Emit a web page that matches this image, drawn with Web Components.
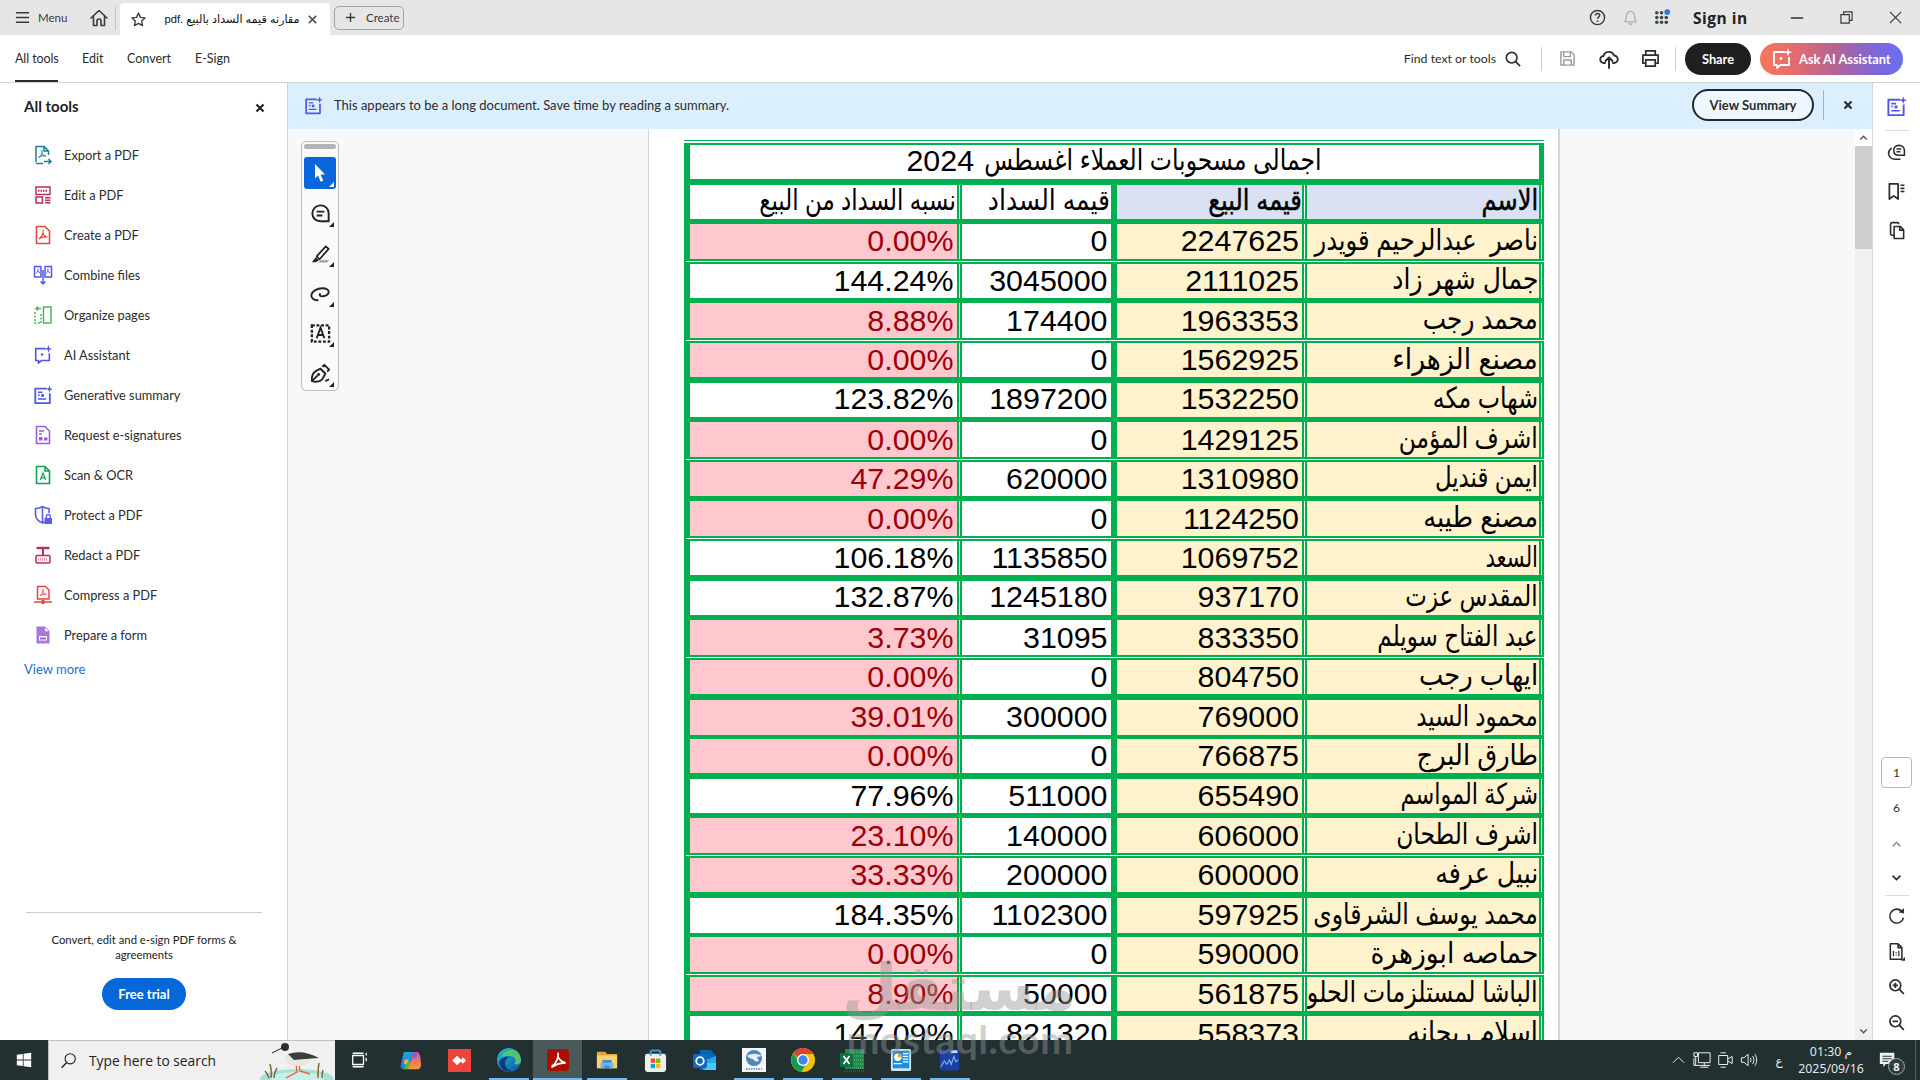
<!DOCTYPE html>
<html lang="en"><head><meta charset="utf-8"><title>Acrobat</title>
<style>
html,body{margin:0;padding:0;width:1920px;height:1080px;overflow:hidden;background:#fff}
body{font-family:Lato,"DejaVu Sans",sans-serif;color:#2c2c2c}
</style></head><body>
<app-shell></app-shell>
<script>
const S='fill="none" stroke="currentColor" stroke-width="1.6" stroke-linecap="round" stroke-linejoin="round"';
const I={
menu:['0 0 16 16','<path d="M1 3h14M1 8h14M1 13h14" fill="none" stroke="currentColor" stroke-width="1.6"/>'],
home:['0 0 20 20',`<path ${S} d="M2 10l8-7.500 8 7.500M4.500 8.500V17.500h3.500v-4.500a2 2 0 0 1 4 0v4.500h3.500V8.500"/>`],
star:['0 0 20 20',`<path ${S} d="M10 2.500l2.300 5 5.400.600-4 3.700 1.100 5.400-4.800-2.700-4.800 2.700 1.100-5.400-4-3.700 5.400-.6z"/>`],
x:['0 0 12 12','<path d="M2 2l8 8M10 2l-8 8" fill="none" stroke="currentColor" stroke-width="1.700"/>'],
xb:['0 0 12 12','<path d="M2.500 2.500l7 7M9.500 2.500l-7 7" fill="none" stroke="currentColor" stroke-width="2.200"/>'],
plus:['0 0 12 12','<path d="M6 1v10M1 6h10" fill="none" stroke="currentColor" stroke-width="1.500"/>'],
help:['0 0 18 18','<circle cx="9" cy="9" r="7.500" fill="none" stroke="currentColor" stroke-width="1.500"/><path d="M6.800 7c0-1.300 1-2.200 2.300-2.200S11.300 5.700 11.300 7c0 1.600-2.200 1.700-2.200 3.300" fill="none" stroke="currentColor" stroke-width="1.500"/><circle cx="9.100" cy="12.800" r="1" fill="currentColor"/>'],
bell:['0 0 18 18',`<path ${S} d="M3 13.500c1.500-1.500 1.500-3 1.500-5.500S6.500 2.500 9 2.500s4.500 3 4.500 5.500 0 4 1.500 5.500zM7.500 15.500c.5 1 2.500 1 3 0"/>`],
apps:['0 0 18 18','<g fill="currentColor"><circle cx="3" cy="4" r="1.900"/><circle cx="8" cy="4" r="1.900"/><circle cx="3" cy="9" r="1.900"/><circle cx="8" cy="9" r="1.900"/><circle cx="13" cy="9" r="1.900"/><circle cx="3" cy="14" r="1.900"/><circle cx="8" cy="14" r="1.900"/><circle cx="13" cy="14" r="1.900"/></g><circle cx="14" cy="3.200" r="3" fill="#1a7fe0"/>'],
min:['0 0 16 16','<path d="M1 8h14" stroke="currentColor" stroke-width="1.800"/>'],
rest:['0 0 14 14',`<path fill="none" stroke="currentColor" stroke-width="1.300" d="M1 4h9v9H1zM4 4V1h9v9h-3"/>`],
close:['0 0 14 14','<path d="M1 1l12 12M13 1L1 13" stroke="currentColor" stroke-width="1.300"/>'],
search:['0 0 18 18','<circle cx="7.500" cy="7.500" r="6" fill="none" stroke="currentColor" stroke-width="1.800"/><path d="M12 12l5 5" stroke="currentColor" stroke-width="1.800"/>'],
save:['0 0 18 18',`<path fill="none" stroke="currentColor" stroke-width="1.500" stroke-linejoin="round" d="M2 2h11l3 3v11H2zM5 2v5h7V2M5 16v-5.500h8V16"/>`],
cloud:['0 0 20 20',`<path fill="none" stroke="currentColor" stroke-width="1.900" stroke-linecap="round" stroke-linejoin="round" d="M6 14H5a3.500 3.500 0 0 1-.5-7A5.500 5.500 0 0 1 15 6.500a3.700 3.700 0 0 1 0 7.500h-1M10 19V9M6.500 12L10 8.500l3.500 3.500"/>`],
print:['0 0 20 20',`<path fill="none" stroke="currentColor" stroke-width="1.800" d="M5 6V2h10v4M5 15H2V6.500h16V15h-3M5 11.500h10V18H5z"/>`],
spark:['0 0 22 22','<path fill="none" stroke="currentColor" stroke-width="1.800" stroke-linejoin="round" d="M14 4H3v13h3v3l3.500-3H18V9"/><circle cx="10" cy="10.500" r="1.400" fill="currentColor"/><path fill="currentColor" d="M17 0l1 3.300 3.300 1-3.300 1-1 3.300-1-3.300-3.300-1 3.300-1z"/>'],
summ:['0 0 22 22','<path fill="none" stroke="currentColor" stroke-width="2" stroke-linejoin="round" d="M15 4H2.500v16h16V9"/><path stroke="currentColor" stroke-width="1.600" d="M5.500 8h5M5.500 11h2M5.500 15.500h9"/><rect x="9" y="10" width="3" height="3" fill="currentColor"/><path fill="currentColor" d="M18 .5l1 3 3 1-3 1-1 3-1-3-3-1 3-1z"/>'],
exp:['0 0 20 20','<path fill="none" stroke="currentColor" stroke-width="1.500" stroke-linejoin="round" d="M3 17V1.500h8L15.500 6v4M11 1.500V6h4.500M3 18.500h7"/><g fill="none" stroke="currentColor" stroke-width="1"><path d="M9 5c.7 3-1 6-3.500 8M9 8c.5 1.500 2 3 4 3M5.500 12c2-1 5-1.500 7.500-1"/></g><path fill="none" stroke="currentColor" stroke-width="1.500" d="M11 16.500h7M15.500 14l2.500 2.500-2.500 2.500"/>'],
edit:['0 0 20 20','<path fill="none" stroke="currentColor" stroke-width="1.500" d="M3 2h14v7.500H3zM3 12h6.500v6H3z"/><path stroke="currentColor" stroke-width="2" stroke-dasharray="1.500 1" d="M5 5.800h10"/><path stroke="currentColor" stroke-width="1.500" d="M12 12.800h5.500M12 15.300h5.500M12 17.800h5.500"/>'],
cre:['0 0 20 20','<path fill="none" stroke="currentColor" stroke-width="1.600" stroke-linejoin="round" d="M3.500 18.500v-17h8.500l4.500 4.500v12.500z"/><path fill="none" stroke="currentColor" stroke-width="1.100" d="M10 4.500c.7 3.500-1.500 7.500-4 9.500M10 8c.5 2 2.200 3.700 4.500 4M6 14c2-1.700 5.500-2.300 8.500-2"/>'],
comb:['0 0 20 20','<path fill="none" stroke="currentColor" stroke-width="1.500" stroke-linejoin="round" d="M8 12H1.500V1.500H8zM12 12h6.500V1.500H12z"/><path fill="none" stroke="currentColor" stroke-width="1" d="M5 3.500c.3 2-1 4-2 5M5 6c.3 1 1 1.500 2 2M15 3.500c.3 2-1 4-2 5M15 6c.3 1 1 1.500 2 2"/><path fill="none" stroke="currentColor" stroke-width="1.500" d="M10 5v14M7.500 16.500L10 19l2.500-2.500"/>'],
org:['0 0 20 20','<rect x="10.500" y="2" width="7.500" height="16" fill="none" stroke="currentColor" stroke-width="1.500"/><path fill="none" stroke="currentColor" stroke-width="1.500" stroke-dasharray="2 1.500" d="M2 7v11h6M8 9v9"/><path fill="none" stroke="currentColor" stroke-width="1.500" d="M8 3.500H3M5 1.500l-2 2 2 2"/>'],
req:['0 0 20 20','<path fill="none" stroke="currentColor" stroke-width="1.600" stroke-linejoin="round" d="M3.500 18.500v-17h8.500l4.500 4.500v12.500z"/><path stroke="currentColor" stroke-width="1.500" d="M6 6h5M6 9h3"/><path fill="currentColor" d="M6 12h3.500v3.500H6zM11 12.500h3.500v3H11z"/>'],
scan:['0 0 20 20','<path fill="none" stroke="currentColor" stroke-width="1.600" stroke-linejoin="round" d="M3.500 18.500v-17h8.500l4.500 4.500v12.500zM12 1.500V6h4.500"/><path fill="none" stroke="currentColor" stroke-width="1.200" d="M7.300 15l2.700-7 2.700 7M8.200 12.800h3.600"/>'],
prot:['0 0 20 20','<path fill="none" stroke="currentColor" stroke-width="1.600" stroke-linejoin="round" d="M9.500 1.500c-2 1.500-4.500 2-7 2v6c0 4 3 7 7 8.500 1-.3 1.500-.5 2.200-1M9.500 1.500c2 1.500 4 2 6.500 2V8M9.500 1.500V18"/><path fill="currentColor" d="M11.500 13h7.500v6h-7.500z"/><path fill="none" stroke="currentColor" stroke-width="1.300" d="M13.300 13v-1.500a2 2 0 0 1 4 0V13"/>'],
red:['0 0 20 20','<path stroke="currentColor" stroke-width="2.400" d="M3.500 3h13"/><path stroke="currentColor" stroke-width="2" d="M10 3v7"/><rect x="3" y="10.500" width="14" height="7.500" rx="1" fill="none" stroke="currentColor" stroke-width="1.500"/><path stroke="currentColor" stroke-width="3" stroke-dasharray="1 1" opacity=".5" d="M5 14.300h10"/>'],
comp:['0 0 20 20','<path fill="none" stroke="currentColor" stroke-width="1.500" stroke-linejoin="round" d="M4.500 14V1.500h8L16 5v9z"/><path fill="none" stroke="currentColor" stroke-width="1" d="M10 4c.5 2.500-1 5-3 6.800M10 6.500c.5 1.300 1.700 2.500 3.200 2.700M7 10.800c1.500-1.200 4-1.700 6.200-1.600"/><path stroke="currentColor" stroke-width="1.500" d="M1 17h18"/><path fill="currentColor" d="M8.500 15h3v4h-3z"/>'],
form:['0 0 20 20','<path fill="currentColor" opacity=".85" fill-rule="evenodd" d="M3.500 1.500H12l4.500 4.500v12.500h-13zM6 11v4.500h8V11z"/><path fill="#fff" d="M12 2.500v3.800h3.800"/><path fill="currentColor" d="M7 12.500h6v2H7z"/>'],
arrow:['0 0 16 20','<path fill="currentColor" d="M3 1l10 10.500H8.500l2.800 6-2.600 1.200-2.700-6.200L3 15.500z"/>'],
cmt:['0 0 24 24',`<path fill="none" stroke="currentColor" stroke-width="2" stroke-linejoin="round" d="M12 3.500c5 0 8.500 3.500 8.500 8v8.500H12C7 20 3.500 16.500 3.500 12S7 3.500 12 3.500z"/><path stroke="currentColor" stroke-width="2" d="M8 10h8M8 14h6"/>`],
pen:['0 0 24 24','<path fill="none" stroke="currentColor" stroke-width="1.800" stroke-linejoin="round" d="M8 15L17.500 4.500l3 2.700L11 18z"/><path fill="currentColor" d="M7 16l3.500 3L7 21H3z"/><path fill="#9a9a9a" d="M12 19h9l-2 2.500h-9z"/>'],
lasso:['0 0 24 24','<path fill="none" stroke="currentColor" stroke-width="2" stroke-linecap="round" d="M9 19C5 19 2 17 2.500 13.500 3 10 8 6.500 14 6.500c4.500 0 7 2 6.500 4.500-.5 2.500-4 4-7 4-2 0-3-1.500-2-2.500"/>'],
seltxt:['0 0 24 24','<path fill="none" stroke="currentColor" stroke-width="2.400" stroke-dasharray="3 1.800" d="M3 3.500h18v17H3z"/><path fill="none" stroke="currentColor" stroke-width="2" d="M8 17l4-11 4 11M9.500 13.500h5"/>'],
sign:['0 0 24 24','<path fill="none" stroke="currentColor" stroke-width="2" stroke-linejoin="round" d="M3 20c-.5-5 1-9 5-11l4-2 5 5-2 4c-2 4-6 5.500-12 4zM14 5l2-2 5 5-2 2M3 20l6-6"/><circle cx="10" cy="13" r="1.500" fill="currentColor"/><path stroke="currentColor" stroke-width="2" d="M17 20l4-2"/>'],
rcom:['0 0 24 24','<path fill="none" stroke="currentColor" stroke-width="2" stroke-linejoin="round" d="M15 3c4 0 7 2.500 7 6.500v6h-7c-4 0-6.500-2.500-6.500-6S11 3 15 3z"/><path stroke="currentColor" stroke-width="2" d="M12 7.500h6M12 11h5"/><path fill="none" stroke="currentColor" stroke-width="2" d="M6 6.500C3.500 8 2 10.500 2 13c0 4 3.500 7.500 8 7.500h7"/>'],
rbook:['0 0 24 24','<path fill="none" stroke="currentColor" stroke-width="2.200" stroke-linejoin="round" d="M3 2.500h11v19l-5.500-4-5.500 4z"/><path stroke="currentColor" stroke-width="2" d="M17 4h5M17 8h5M17 12h5"/>'],
rpage:['0 0 24 24','<path fill="none" stroke="currentColor" stroke-width="2" stroke-linejoin="round" d="M9 7h8l4 4v11H9zM16 7v4.500h5M9 18H6.500a2 2 0 0 1-2-2V4a2 2 0 0 1 2-2H13c1.500 0 2 1 2 2"/>'],
up:['0 0 14 10','<path d="M2 8l5-5 5 5" fill="none" stroke="currentColor" stroke-width="2.200"/>'],
down:['0 0 14 10','<path d="M2 2l5 5 5-5" fill="none" stroke="currentColor" stroke-width="2.200"/>'],
rot:['0 0 22 22','<path fill="none" stroke="currentColor" stroke-width="1.900" d="M17.500 6A8.500 8.500 0 1 0 19 13"/><path fill="currentColor" d="M13 6.500l6.500 1.500V1.500z"/>'],
fit:['0 0 22 24','<path fill="none" stroke="currentColor" stroke-width="2" stroke-linejoin="round" d="M3 2h10l5 5v15H3zM13 2v5h5"/><path stroke="currentColor" stroke-width="1.600" d="M7 11v7M14 11v7M10.500 12.500v1.300M10.500 15.500v1.300"/><path fill="currentColor" d="M22 19v5h-5z"/>'],
zin:['0 0 22 22','<circle cx="9.500" cy="9.500" r="7" fill="none" stroke="currentColor" stroke-width="2.200"/><path stroke="currentColor" stroke-width="2.200" d="M14.500 14.500l6 6M6 9.500h7M9.500 6v7"/>'],
zout:['0 0 22 22','<circle cx="9.500" cy="9.500" r="7" fill="none" stroke="currentColor" stroke-width="2.200"/><path stroke="currentColor" stroke-width="2.200" d="M14.500 14.500l6 6M6 9.500h7"/>'],
win:['0 0 20 20','<path fill="currentColor" d="M1 3.500l7.500-1v7H1zM9.500 2.300L19 1v8.500H9.500zM1 10.500h7.500v7l-7.500-1zM9.500 10.500H19V19l-9.500-1.300z"/>'],
mag:['0 0 20 20','<circle cx="12" cy="8" r="6" fill="none" stroke="currentColor" stroke-width="1.300"/><path stroke="currentColor" stroke-width="1.600" d="M7.800 12.300L2 18.500"/>'],
tview:['0 0 20 20','<path fill="none" stroke="currentColor" stroke-width="1.400" d="M3 5h12v10H3zM3 2.500h12M3 17.500h12M18 2v3M18 7.500v4"/>'],
copilot:['0 0 24 24','<defs><linearGradient id="a" x1="0" y1="0" x2="0" y2="1"><stop offset="0" stop-color="#1aa7d8"/><stop offset="1" stop-color="#2f6fe0"/></linearGradient><linearGradient id="b" x1="0" y1="0" x2="0" y2="1"><stop offset="0" stop-color="#e64fa0"/><stop offset="1" stop-color="#f59a2e"/></linearGradient></defs><path fill="url(#a)" d="M5 3h10l-3 10-3 8H5c-3 0-4-2-3-5z"/><path fill="#49b84f" d="M8 14l3-3 1 4-3 6-4 0z"/><path fill="url(#b)" d="M15 3h3c2 0 3 1 4 4l1 8c0 4-1 6-4 6H9l4-10z"/><path fill="#f6b833" d="M6 11h4l-2 5H5z"/><path fill="#8e5be0" d="M14 3h4l1 5-4 3z"/>'],
any:['0 0 24 24','<rect width="24" height="24" fill="#ef443b"/><path fill="#fff" d="M9.500 7l5 5-5 5-5-5zM15.500 8.500L19 12l-3.500 3.500L12.800 12l1-.8z"/>'],
edge:['0 0 24 24','<defs><linearGradient id="e" x1="0" y1="0" x2="1" y2="1"><stop offset="0" stop-color="#1fc4c8"/><stop offset="1" stop-color="#0b53a8"/></linearGradient></defs><circle cx="12" cy="12" r="12" fill="url(#e)"/><path fill="#55c271" d="M4 9c2-6 10-9 15-6 4 2.500 5 7 5 10 0 3-4 4-7 3 3-3 1-8-4-8-4 0-7 0-9 1z"/><path fill="#0a3a82" d="M9 12c-3 4 0 10 7 11-6 2-13-1-14-9 1-3 5-6 11-5-2 0-3 1-4 3z"/>'],
acro:['0 0 24 24','<rect width="24" height="24" rx="3" fill="#a90f02"/><path fill="none" stroke="#fff" stroke-width="1.800" d="M12 4c1.200 6-2 11-6.500 15 0 0-.5 1 .5.500 4-3 9-4.500 13-4 1 0 1-1 0-1-3-.5-6-3.500-7.500-7"/>'],
folder:['0 0 24 24','<path fill="#e3a73a" d="M1 3h9l2 2.500h11V21H1z"/><path fill="#f7d26e" d="M1 7h22v14H1z"/><path fill="#3d8fde" d="M7 12h10v9H7z"/><path fill="#74b7ef" d="M5 15h14v6h-4v-3H9v3H5z"/>'],
store:['0 0 24 24','<rect x="1" y="5" width="22" height="19" rx="2.500" fill="#f1eeea"/><path fill="none" stroke="#2aa0ea" stroke-width="2" d="M7 7V3.500a2 2 0 0 1 2-2h6a2 2 0 0 1 2 2V7"/><path fill="#f25022" d="M7 10h4.500v4.500H7z"/><path fill="#7fba00" d="M12.500 10H17v4.500h-4.500z"/><path fill="#00a4ef" d="M7 15.500h4.500V20H7z"/><path fill="#ffb900" d="M12.500 15.500H17V20h-4.500z"/>'],
outl:['0 0 24 24','<path fill="#0a64b5" d="M7 2h11l5 6v14H7z"/><path fill="#28a8ea" d="M10 13l13-5v14H10z"/><path fill="#50d9ff" d="M12 15h11v7H12z" opacity=".7"/><rect x="0" y="6" width="14" height="14" rx="1.500" fill="#0c6ac0"/><circle cx="7" cy="13" r="3.800" fill="none" stroke="#fff" stroke-width="1.800"/>'],
iobit:['0 0 24 24','<rect width="24" height="24" fill="#f4f6f8"/><circle cx="12" cy="10" r="8" fill="#4a87bd"/><path fill="#e8eef3" d="M5 8c4-3 10-3 15 0l-5 1 2 4c-3 1-5 0-6-2-2 0-4-1-6-3z"/><path stroke="#5a82a8" stroke-width="1.500" stroke-dasharray="1.500 1" d="M4 21h16"/>'],
chrome:['0 0 24 24','<circle cx="12" cy="12" r="12" fill="#f4c20d"/><path fill="#db4437" d="M12 0a12 12 0 0 1 10.400 6H12a6 6 0 0 0-5.500 3.600L2.500 5A12 12 0 0 1 12 0z"/><path fill="#0f9d58" d="M2.500 5l5 8.600a6 6 0 0 0 6.400 4L10.400 24A12 12 0 0 1 2.500 5z"/><circle cx="12" cy="12" r="6" fill="#fff"/><circle cx="12" cy="12" r="4.700" fill="#4285f4"/>'],
excel:['0 0 24 24','<rect x="5" y="1" width="19" height="20" fill="#1e8a4e"/><path stroke="#8fc7a5" stroke-width=".8" stroke-dasharray="1 1" d="M14 4h9M14 8h9M14 12h9M14 16h9M14 20h9"/><path stroke="#7cc" stroke-width=".8" stroke-dasharray="1 1" opacity=".6" d="M5 23h19"/><rect y="5" width="13" height="14" fill="#107040"/><path stroke="#fff" stroke-width="1.800" d="M3.500 8l6 8M9.500 8l-6 8"/>'],
chart:['0 0 24 24','<rect x="1" width="22" height="24" rx="2" fill="#cfe6f8"/><rect x="3" y="2" width="18" height="19" fill="#1c8fd8"/><circle cx="8.500" cy="9" r="4" fill="#fff"/><path fill="#f6a52c" d="M8.500 9V5a4 4 0 0 1 4 4z"/><path stroke="#fff" stroke-width="1.400" d="M14 5h6M14 8h6M14 11h6M14 14h6M4 16h9"/>'],
wave:['0 0 24 24','<rect x="1" width="22" height="24" rx="2" fill="#1d3f9e"/><path fill="#cfe4ff" d="M14 1h7v3h-7z"/><path fill="none" stroke="#6fc0ff" stroke-width="1.200" d="M2 20l4-7 3 4 3-5 2 5 3-9 2 6 3-2"/>'],
net:['0 0 20 20','<path fill="none" stroke="currentColor" stroke-width="1.100" d="M6 2h13v11H6zM1 2h4v4H1zM1 8v8h18M3 6v10M12.500 13v4M8 18h9"/>'],
meet:['0 0 20 20','<path fill="none" stroke="currentColor" stroke-width="1.100" d="M3 5h10v10H3zM13 9l5-3v8l-5-3M5 2h6M5 18h6"/>'],
vol:['0 0 20 20','<path fill="none" stroke="currentColor" stroke-width="1.100" d="M1.500 7.500h3L9 3.500v13l-4.500-4h-3zM11.500 7.500c1 1.500 1 3.500 0 5M14 5.500c2 3 2 6 0 9M16.500 3.500c2.700 4 2.700 9 0 13"/>'],
notif:['0 0 20 20','<path fill="#f2f2f2" d="M1 1h17v13H8l-3 3.500V14H1z"/><path stroke="#223030" stroke-width="1.200" d="M4 5h11M4 8h11M4 11h7"/>'],
chevt:['0 0 16 10','<path d="M1 8.500l7-7 7 7" fill="none" stroke="currentColor" stroke-width="1.200"/>']
};
const style=`<style>:host{display:inline-flex;align-items:center;justify-content:center;flex:none;line-height:0}svg{display:block;overflow:visible}</style>`;
customElements.define('x-icon',class extends HTMLElement{connectedCallback(){
  const [vb,body]=I[this.getAttribute('name')];const w=this.getAttribute('w')||16,h=this.getAttribute('h')||w;
  (this.shadowRoot||this.attachShadow({mode:'open'})).innerHTML=style+`<svg xmlns="http://www.w3.org/2000/svg" width="${w}" height="${h}" viewBox="${vb}">${body}</svg>`;}});
const def=(tag,fn)=>customElements.define(tag,class extends HTMLElement{connectedCallback(){if(this.shadowRoot)return;this.attachShadow({mode:'open'}).innerHTML=fn(this);}});

def('tab-bar',()=>`<style>
:host{display:flex;align-items:center;height:35px;background:#e6e6e6;flex:none;font-size:11.500px;color:#3a3a3a}
.tab{align-self:flex-end;margin-left:4px;width:210px;height:32px;background:#fff;border-radius:4px 4px 0 0;display:flex;align-items:center;box-sizing:border-box;padding-left:10px}
.t{margin-left:20px;width:130px;flex:none;white-space:nowrap;font:11.200px "Liberation Sans","DejaVu Sans",sans-serif;color:#111;text-align:center;display:flex;justify-content:center}
.div{width:1px;height:24px;background:#c4c4c4;margin-left:6px}
.cr{margin-left:4px;width:70px;height:24px;box-sizing:border-box;border:1.500px solid #a2a2a2;border-radius:5px;display:flex;align-items:center;padding-left:10px;gap:10px}
.sign{font:700 15.500px "Open Sans","Noto Sans",sans-serif;letter-spacing:.5px;margin-left:22px;color:#222;width:52px;white-space:nowrap}
</style>
<x-icon name="menu" w="15" style="margin-left:15px"></x-icon><span style="margin-left:8px;width:28px">Menu</span>
<x-icon name="home" w="20" style="margin-left:23px"></x-icon><span class="div"></span>
<div class="tab"><x-icon name="star" w="17"></x-icon><span class="t" dir="rtl">مقارنه قيمه السداد بالبيع .pdf</span><x-icon name="x" w="11" style="margin-left:10px;color:#555"></x-icon></div>
<div class="cr"><x-icon name="plus" w="11"></x-icon><span>Create</span></div>
<span style="flex:1"></span>
<x-icon name="help" w="17"></x-icon><x-icon name="bell" w="17" style="margin-left:16px;color:#b5b5b5"></x-icon><x-icon name="apps" w="17" style="margin-left:15px;color:#3a4a50"></x-icon>
<span class="sign">Sign in</span>
<x-icon name="min" w="14" style="margin-left:45px"></x-icon><x-icon name="rest" w="13" style="margin-left:36px"></x-icon><x-icon name="close" w="13" style="margin-left:36px;margin-right:18px"></x-icon>`);

def('tool-bar',()=>`<style>
:host{display:flex;align-items:stretch;height:48px;box-sizing:border-box;background:#fff;border-bottom:1px solid #d2d2d2;flex:none;font-size:12.500px;color:#2c2c2c}
.n{display:flex;align-items:center;box-sizing:border-box;border-bottom:2px solid transparent;padding-top:1px;white-space:nowrap;margin-left:24px}
.on{border-bottom-color:#2c2c2c;margin-left:15px;width:43px;letter-spacing:-.1px}
.r{display:flex;align-items:center;margin-left:auto}
.d{width:1px;height:24px;background:#d0d0d0}
.sh{margin-left:9px;width:66px;height:32px;border-radius:16px;background:#1f1f1f;color:#fff;font-weight:700;font-size:12.800px;display:flex;align-items:center;justify-content:center}
.ai{margin-left:9px;margin-right:17px;width:143px;height:32px;border-radius:16px;background:linear-gradient(90deg,#f5785a 0%,#e56a70 25%,#b9648f 50%,#7d67d8 80%,#6a6ff2 100%);color:#fff;font-weight:700;font-size:12.800px;display:flex;align-items:center;padding-left:11px;box-sizing:border-box;gap:6px}
</style>
<div class="n on">All tools</div><div class="n" style="width:21px">Edit</div><div class="n" style="width:44px">Convert</div><div class="n" style="width:35px">E-Sign</div>
<div class="r"><span style="font-size:12.300px">Find text or tools</span><x-icon name="search" w="16" style="margin-left:9px"></x-icon><span class="d" style="margin-left:20px"></span>
<x-icon name="save" w="17" style="margin-left:17px;color:#9a9a9a"></x-icon><x-icon name="cloud" w="20" style="margin-left:23px"></x-icon><x-icon name="print" w="19" style="margin-left:22px"></x-icon><span class="d" style="margin-left:15px"></span>
<div class="sh">Share</div><div class="ai"><x-icon name="spark" w="22"></x-icon><span>Ask AI Assistant</span></div></div>`);

def('tool-item',h=>`<style>
:host{display:flex;align-items:center;height:40px;padding-left:33px;font-size:12.800px;color:#2c2c2c}
x-icon{color:${h.getAttribute('c')}}
span{margin-left:11px}
</style><x-icon name="${h.getAttribute('i')}" w="20"></x-icon><span><slot></slot></span>`);

def('tools-panel',()=>`<style>
:host{display:flex;flex-direction:column;width:288px;box-sizing:border-box;border-right:1.500px solid #d2d2d2;background:#fff;flex:none}
.h{height:46px;margin-bottom:6px;display:flex;align-items:center;padding-left:24px;font-weight:700;font-size:15px;color:#222}
.h x-icon{margin-left:auto;margin-right:21px;margin-top:4px}
.more{height:28px;display:flex;align-items:center;padding-left:24px;color:#1c6fd0;font-size:13px}
.f{margin:auto 25px 0 26px;border-top:1px solid #cfcfcf;padding:19px 0 30px;text-align:center;font-size:11.300px;line-height:15px;color:#222}
.b{display:block;margin:16px auto 0;width:84px;height:32px;line-height:32px;border-radius:16px;background:#0667d8;color:#fff;font-weight:700;font-size:13px}
</style><div class="h">All tools<x-icon name="xb" w="12"></x-icon></div><slot></slot>
<div class="more">View more</div>
<div class="f">Convert, edit and e-sign PDF forms &amp;<br>agreements<span class="b">Free trial</span></div>`);

def('summary-banner',()=>`<style>
:host{display:flex;align-items:center;height:46px;box-sizing:border-box;background:#dcefff;padding:0 0 2px 16px;flex:none;font-size:13px;color:#2c2c2c}
.v{margin-left:auto;width:122px;height:32px;box-sizing:border-box;border:2px solid #1f2a30;border-radius:16px;background:#eef7ff;display:flex;align-items:center;justify-content:center;font-weight:700;font-size:13px}
.d{width:1px;height:30px;background:#a9b6c0;margin-left:9px}
</style><x-icon name="summ" w="19" style="color:#5258e4"></x-icon><span style="margin-left:11px">This appears to be a long document. Save time by reading a summary.</span>
<div class="v">View Summary</div><span class="d"></span><x-icon name="xb" w="12" style="margin-left:18px;margin-right:18px"></x-icon>`);

def('float-tools',()=>{const t=(n,b)=>`<div class="it${b?' on':''}"><x-icon name="${n}" w="${b?16:23}" ${b?'h="20"':''}></x-icon><i></i></div>`;return `<style>
:host{position:absolute;left:13px;top:12px;width:38px;height:250px;box-sizing:border-box;background:#fafafa;border:1.500px solid #bdbdbd;border-radius:5px;padding:2px 2px 0;z-index:2}
.g{height:5px;border-radius:3px;background:#b4b4b4;margin-bottom:8px}
.it{position:relative;width:32px;height:32px;margin-bottom:8px;display:flex;align-items:center;justify-content:center;color:#222;border-radius:3px}
.it i{position:absolute;right:2px;bottom:2px;border-left:5px solid transparent;border-bottom:5px solid currentColor}
.on{background:#0a66dd;color:#fff}
</style><div class="g"></div>${t('arrow',1)}${t('cmt')}${t('pen')}${t('lasso')}${t('seltxt')}${t('sign')}`});

def('pdf-row',h=>{
 const kind=h.getAttribute('gap'),hd=h.hasAttribute('head'),low=h.hasAttribute('low'),g=kind==='thick'?5.6:4.6;
 const cream=hd?'#d9e1f2':'#fff2cc';
 const ar=(t,s,cls='')=>`<span class="sc ${cls}" style="transform:scaleX(${s})">${t}</span>`;
 const sc=h.getAttribute('scale')||'.86';
 const v=(a,s,c)=>hd?ar(h.getAttribute(a),s,c):h.getAttribute(a);
 return `<style>
:host{display:block;height:39.620px;overflow:hidden;background:#00b050}
:host([head]){height:39.200px}
.c{display:grid;grid-template-columns:6px 267px 5px 149px 6px 185.500px 4.500px 232px 5px;height:${(hd?39.2:39.62)-g}px;font:30.400px/1 "Liberation Sans",sans-serif;color:#000}
.c>div{display:flex;align-items:center;justify-content:flex-end;overflow:hidden;white-space:nowrap;padding:0 3px 2px 0}
.l{background:linear-gradient(90deg,#00b050 0 35%,#fff 35% 60%,#00b050 60%)}
.p{background:#fff;${low?'background:#ffc7ce;color:#9c0006;':''}}
.w{background:#fff}.k{background:${cream}}
.a{font-family:"Liberation Sans","DejaVu Sans",sans-serif;padding-right:.5px !important;justify-content:flex-start !important;direction:rtl}
.sc{display:inline-block;flex:none;white-space:pre;font:29px/1 "Liberation Sans","DejaVu Sans",sans-serif;transform-origin:100% 50%}
.bd{-webkit-text-stroke:.5px #000}
.g{height:${g}px;margin-left:2.500px;${kind==='thin'?'background:linear-gradient(#00b050 0 38%,#fff 38% 60%,#00b050 60%);':''}}
.c>.sp{padding:0}
</style><div class="c"><div class="sp"></div>
<div class="p ${hd?'a':''}">${v('pct','.79')}</div><div class="l sp"></div>
<div class="w ${hd?'a':''}">${v('paid','.86')}</div><div class="sp"></div>
<div class="k ${hd?'a':''}">${v('sale','.83','bd')}</div><div class="l sp"></div>
<div class="k a">${ar(h.getAttribute('name'),hd?'.83':sc,hd?'bd':'')}</div><div class="l sp"></div></div><div class="g"></div>`});

def('pdf-title',()=>`<style>
:host{display:block;background:#00b050;padding:0 5px 0 6px;height:45px;box-sizing:border-box}
.t{height:5px;margin:0 -5px 0 -6px;background:linear-gradient(#00b050 0 30%,#fff 30% 55%,#00b050 55%)}
.m{height:34px;box-sizing:border-box;padding-bottom:3px;background:#fff;display:flex;align-items:center;justify-content:center;direction:rtl;color:#000}
.ar{display:inline-block;flex:none;white-space:pre;font:29px/1 "Liberation Sans","DejaVu Sans",sans-serif;transform:scaleX(.81);transform-origin:100% 50%;margin-left:-79px}
b{font:400 30.400px/1 "Liberation Sans",sans-serif;margin-right:10px;flex:none}
</style><div class="t"></div><div class="m"><span class="ar"><slot></slot></span><b>2024</b></div>`);

def('pdf-page',()=>`<style>
:host{display:block;width:912px;box-sizing:border-box;margin-left:360px;background:#fff;border-left:1.500px solid #d4d4d4;border-right:2px solid #d4d4d4;padding:11px 0 0 34.500px;min-height:100%}
.tb{width:860px}
</style><div class="tb"><slot></slot></div>`);

def('doc-view',()=>`<style>
:host{display:flex;flex-direction:column;flex:1;min-width:0;background:#f8f8f8}
.b{display:flex;flex:1;min-height:0}
.v{position:relative;flex:1;overflow:hidden;background:#f8f8f8}
.sb{width:17px;flex:none;background:#f0f0f0;position:relative;display:flex;flex-direction:column;align-items:center;color:#555}
.top,.bot{height:17px;width:17px;background:#fff;display:flex;align-items:center;justify-content:center;flex:none}
.th{height:103px;width:100%;background:#cdcfcd;flex:none}
.bot{margin-top:auto;background:#f0f0f0}
</style><summary-banner></summary-banner><div class="b"><div class="v"><float-tools></float-tools><slot></slot></div>
<div class="sb"><div class="top"><x-icon name="up" w="9" h="7"></x-icon></div><div class="th"></div><div class="bot"><x-icon name="down" w="9" h="7"></x-icon></div></div></div>`);

def('right-rail',()=>`<style>
:host{display:flex;flex-direction:column;align-items:center;width:48px;box-sizing:border-box;border-left:1.500px solid #d8d8d8;background:#fff;flex:none;color:#2c2c2c;font-size:12px}
.i{display:flex;align-items:center;justify-content:center;width:100%;flex:none}
.s{width:24px;height:1px;background:#dcdcdc;margin:0 auto;flex:none}
.box{width:31px;height:31px;box-sizing:border-box;border:1px solid #b8b8b8;border-radius:4px;display:flex;align-items:center;justify-content:center;flex:none;margin-top:auto}
</style>
<div class="i" style="height:46px"><x-icon name="summ" w="21" style="color:#5258e4"></x-icon></div><div class="s" style="margin-top:1px"></div>
<div class="i" style="height:42px"><x-icon name="rcom" w="19"></x-icon></div><div class="i" style="height:36px"><x-icon name="rbook" w="19"></x-icon></div><div class="i" style="height:42px"><x-icon name="rpage" w="19"></x-icon></div>
<div class="box">1</div><div class="i" style="height:37px;margin-top:1px;padding-bottom:1px">6</div>
<div class="i" style="height:34px;color:#9a9a9a"><x-icon name="up" w="11" h="8"></x-icon></div><div class="i" style="height:34px"><x-icon name="down" w="11" h="8"></x-icon></div><div class="s"></div>
<div class="i" style="height:36px;margin-top:2px"><x-icon name="rot" w="18"></x-icon></div><div class="i" style="height:34px"><x-icon name="fit" w="17" h="19"></x-icon></div>
<div class="i" style="height:36px"><x-icon name="zin" w="17"></x-icon></div><div class="i" style="height:36px"><x-icon name="zout" w="17"></x-icon></div>`);

def('task-slot',h=>`<style>
:host{display:flex;align-items:center;justify-content:center;width:49px;height:40px;position:relative;flex:none;${h.hasAttribute('active')?'background:#4a5a5b;':''}}
i{position:absolute;bottom:0;left:${h.hasAttribute('active')?'0':'5px'};right:${h.hasAttribute('active')?'0':'4px'};height:2px;background:#76b9ed;display:${h.hasAttribute('run')?'block':'none'}}
</style><slot></slot><i></i>`);

def('task-bar',()=>{const tray=(n,w)=>`<span style="width:${w}px;display:flex;justify-content:center;flex:none"><x-icon name="${n}" w="18"></x-icon></span>`;
const bird=`<svg width="75" height="40" viewBox="0 0 75 40" style="position:absolute;right:0;top:0"><ellipse cx="37" cy="38" rx="37" ry="10" fill="#a9e0d6"/><ellipse cx="37" cy="37" rx="27" ry="6" fill="#c9efe8"/><path d="M11 37c1-5 0-10-1-14M14 37c0-4 1-7 3-10M9 37c-1-3-2-5-4-7M58 37c0-5 0-10 1-15M62 37c0-3 0-5 1-8" stroke="#7a6a3a" stroke-width="1.500" fill="none"/><path d="M36 23l1 8-11 6M39 23l1 7 10 3" stroke="#e8603c" stroke-width="1.400" fill="none"/><path d="M24 8l8 7-3 2-8-7z" fill="#f0efe9"/><ellipse cx="38" cy="18" rx="13" ry="7" fill="#e8e6df"/><path d="M28 13Q42 8 59 17 44 18 34 19z" fill="#3a3c40"/><circle cx="25" cy="6" r="4" fill="#2e2e30"/><path d="M22 7L12 12" stroke="#222" stroke-width="1"/></svg>`;
return `<style>
:host{display:flex;align-items:center;height:40px;background:#223031;flex:none;color:#eee;position:relative;z-index:3}
.st{width:48px;height:40px;display:flex;align-items:center;justify-content:center;flex:none;color:#fff}
.se{position:relative;width:287px;height:40px;box-sizing:border-box;background:#f0f0f0;border-top:1px solid #bfbfbf;border-left:1px solid #bfbfbf;color:#222;display:flex;align-items:center;padding-left:11px;flex:none;overflow:hidden;font:13.800px "Open Sans",sans-serif}
.se span{margin-left:12px}
.gap{flex:1}
.clk{width:68px;flex:none;text-align:center;font:12.300px/17px "Noto Sans","DejaVu Sans",sans-serif;color:#e6e6e6}
.lang{width:36px;text-align:center;font:12px "Noto Sans","DejaVu Sans",sans-serif;flex:none}
.no{position:relative;width:45px;flex:none;display:flex;justify-content:center}
.bd{position:absolute;left:23px;top:6px;width:15px;height:15px;border:1px solid #9aa;border-radius:50%;background:#2f3d3e;text-align:center;font:700 11px/15px "Noto Sans",sans-serif;color:#f2f2f2}
.ln{width:1px;height:40px;background:#506060;margin-left:5px;margin-right:4px}
</style><div class="st"><x-icon name="win" w="16"></x-icon></div>
<div class="se"><x-icon name="mag" w="17" style="color:#222"></x-icon><span>Type here to search</span>${bird}</div>
<div style="display:flex;margin-left:2px"><task-slot><x-icon name="tview" w="18" style="color:#fff;margin-right:6px"></x-icon></task-slot>
<task-slot><x-icon name="copilot" w="23"></x-icon></task-slot><task-slot><x-icon name="any" w="23"></x-icon></task-slot><task-slot run><x-icon name="edge" w="24"></x-icon></task-slot>
<task-slot active run><x-icon name="acro" w="22"></x-icon></task-slot><task-slot run><x-icon name="folder" w="22"></x-icon></task-slot><task-slot><x-icon name="store" w="23"></x-icon></task-slot><task-slot><x-icon name="outl" w="24"></x-icon></task-slot>
<task-slot run><x-icon name="iobit" w="24"></x-icon></task-slot><task-slot run><x-icon name="chrome" w="24"></x-icon></task-slot><task-slot run><x-icon name="excel" w="24"></x-icon></task-slot><task-slot run><x-icon name="chart" w="22"></x-icon></task-slot><task-slot run><x-icon name="wave" w="21" h="24"></x-icon></task-slot></div>
<span class="gap"></span>
<span style="width:24px;display:flex;justify-content:center;flex:none"><x-icon name="chevt" w="13" h="8"></x-icon></span>${tray('net',23)}${tray('meet',24)}${tray('vol',24)}
<span class="lang">ع</span><div class="clk"><div dir="ltr">01:30 م</div><div>2025/09/16</div></div>
<div class="no"><x-icon name="notif" w="17"></x-icon><span class="bd">8</span></div><span class="ln"></span>`});

def('water-mark',()=>`<style>
:host{position:absolute;left:844px;top:950px;width:232px;height:106px;z-index:5;pointer-events:none;color:rgba(150,150,150,.45);text-align:center;line-height:1}
.a{font:700 64px/76px "DejaVu Sans",sans-serif;height:76px;direction:rtl;white-space:nowrap}
.b{font:700 39px/26px Lato,sans-serif;letter-spacing:.5px;white-space:nowrap}
</style><div class="a">مستقل</div><div class="b">mostaql.com</div>`);

const rows=[
['ناصر  عبدالرحيم قويدر','2247625','0','0.00%',1,'thin','.834'],['جمال شهر زاد','2111025','3045000','144.24%',0,'thick','.862'],['محمد رجب','1963353','174400','8.88%',1,'thin','.853'],['مصنع الزهراء','1562925','0','0.00%',1,'thick','.916'],
['شهاب مكه','1532250','1897200','123.82%',0,'thick','.815'],['اشرف المؤمن','1429125','0','0.00%',1,'thin','.805'],['ايمن قنديل','1310980','620000','47.29%',1,'thick','.787'],['مصنع طيبه','1124250','0','0.00%',1,'thin','.89'],
['السعد','1069752','1135850','106.18%',0,'thick','.73'],['المقدس عزت','937170','1245180','132.87%',0,'thick','.789'],['عبد الفتاح سويلم','833350','31095','3.73%',1,'thin','.795'],['ايهاب رجب','804750','0','0.00%',1,'thick','.889'],
['محمود السيد','769000','300000','39.01%',1,'thin','.79'],['طارق البرج','766875','0','0.00%',1,'thick','.886'],['شركة المواسم','655490','511000','77.96%',0,'thick','.772'],['اشرف الطحان','606000','140000','23.10%',1,'thin','.806'],
['نبيل عرفه','600000','200000','33.33%',1,'thick','.872'],['محمد يوسف الشرقاوى','597925','1102300','184.35%',0,'thin','.808'],['حماصه ابوزهرة','590000','0','0.00%',1,'thin','.916'],['الباشا لمستلزمات الحلويات','561875','50000','8.90%',1,'thick','.82'],['اسلام ريحانه','558373','821320','147.09%',0,'thin','.877']];
const items=[['exp','#17809c','Export a PDF'],['edit','#b5305f','Edit a PDF'],['cre','#e3473b','Create a PDF'],['comb','#5258e4','Combine files'],['org','#4fb360','Organize pages'],['spark','#5258e4','AI Assistant'],['summ','#5258e4','Generative summary'],['req','#9a5fd6','Request e-signatures'],['scan','#12a150','Scan & OCR'],['prot','#5c5ce0','Protect a PDF'],['red','#b5305f','Redact a PDF'],['comp','#e3473b','Compress a PDF'],['form','#9a5fd6','Prepare a form']];
def('app-shell',()=>`<style>
:host{display:flex;flex-direction:column;width:1920px;height:1080px;position:relative;overflow:hidden}
.m{display:flex;flex:1;min-height:0}
</style><tab-bar></tab-bar><tool-bar></tool-bar>
<div class="m"><tools-panel>${items.map(i=>`<tool-item i="${i[0]}" c="${i[1]}">${i[2].replace('&','&amp;')}</tool-item>`).join('')}</tools-panel>
<doc-view><pdf-page><pdf-title>اجمالى مسحوبات العملاء اغسطس</pdf-title>
<pdf-row head gap="thick" name="الاسم" sale="قيمه البيع" paid="قيمه السداد" pct="نسبه السداد من البيع"></pdf-row>
${rows.map(r=>`<pdf-row name="${r[0]}" sale="${r[1]}" paid="${r[2]}" pct="${r[3]}" gap="${r[5]}" scale="${r[6]}" ${r[4]?'low':''}></pdf-row>`).join('')}
</pdf-page></doc-view><right-rail></right-rail></div><task-bar></task-bar><water-mark></water-mark>`);
</script></body></html>
